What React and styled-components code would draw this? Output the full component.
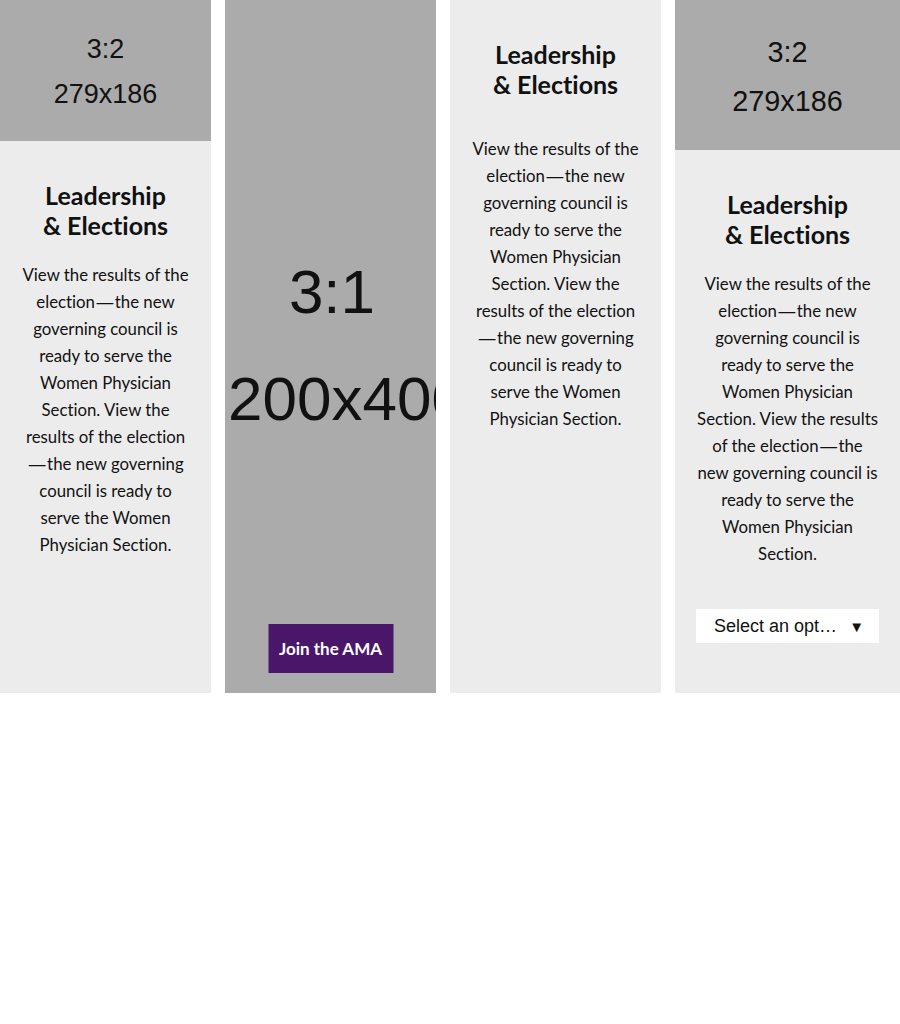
import React from 'react';
import styled, { createGlobalStyle } from 'styled-components';

const GlobalStyle = createGlobalStyle`
  html, body {
    margin: 0;
    padding: 0;
    background: #ffffff;
  }
  body {
    font-family: Lato, "Open Sans", sans-serif;
    color: #111111;
  }
`;

const Grid = styled.div`
  display: grid;
  grid-template-columns: 211px 211px 211px 1fr;
  column-gap: 14px;
  align-items: stretch;
  width: 900px;
`;

const Card = styled.article`
  container-type: inline-size;
  display: flex;
  flex-direction: column;
  background: #ececec;
  min-width: 0;
`;

const Placeholder = styled.div`
  width: 100%;
  aspect-ratio: 3 / 2;
  background: #ababab;
  display: flex;
  flex-direction: column;
  align-items: center;
  justify-content: center;
  padding-top: 3px;
  box-sizing: border-box;
  font-family: "Liberation Sans", Arial, sans-serif;
  color: #111111;
  font-size: 12.8cqw;
  line-height: 1.67;
`;

const Tall = styled.div`
  position: relative;
  flex: 1;
  background: #ababab;
  overflow: hidden;
  display: flex;
  flex-direction: column;
  justify-content: center;
  font-family: "Liberation Sans", Arial, sans-serif;
  color: #111111;
  font-size: 62px;
  line-height: 107px;
  white-space: nowrap;
  padding: 0 0 4px 3px;
`;

const TallLine = styled.div`
  text-align: ${(p) => (p.$left ? 'left' : 'center')};
`;

const JoinButton = styled.a`
  position: absolute;
  left: 50%;
  bottom: 20px;
  transform: translateX(-50%);
  display: inline-flex;
  align-items: center;
  justify-content: center;
  width: 125px;
  height: 49px;
  background: #49166a;
  color: #ffffff;
  font-family: Lato, "Open Sans", sans-serif;
  font-weight: 700;
  font-size: 17px;
  line-height: 1;
  text-decoration: none;
  font-variant-ligatures: none;
`;

const Body = styled.div`
  flex: 1;
  display: flex;
  flex-direction: column;
  align-items: stretch;
  padding: 39px 21px 50px;
  text-align: center;
  font-variant-ligatures: none;
`;

const Title = styled.h3`
  margin: 0 0 ${(p) => p.$gap}px;
  font-family: Lato, "Open Sans", sans-serif;
  font-weight: 700;
  font-size: 25px;
  line-height: 30px;
  color: #111111;
`;

const Text = styled.p`
  margin: 0;
  font-family: Lato, "Open Sans", sans-serif;
  font-size: 16.8px;
  line-height: 27px;
  color: #111111;
`;

const Dash = styled.span`
  font-family: "Liberation Sans", Arial, sans-serif;
  line-height: 1;
  padding: 0 1.5px;
`;

const SelectBox = styled.div`
  display: flex;
  align-items: center;
  margin-top: 42px;
  height: 34px;
  padding: 0 15px 0 18px;
  background: #ffffff;
  font-family: "Liberation Sans", Arial, sans-serif;
  font-size: 18px;
  color: #111111;
  text-align: left;
`;

const SelectLabel = styled.span`
  flex: 1;
  min-width: 0;
  overflow: hidden;
  white-space: nowrap;
  text-overflow: ellipsis;
  padding-right: 10px;
`;

const Caret = styled.span`
  font-size: 15px;
  line-height: 1;
`;

const sentence = (
  <>
    View the results of the election<Dash>—</Dash>the new governing council is
    ready to serve the Women Physician Section.
  </>
);

function CardBody({ titleGap = 21, children }) {
  return (
    <Body>
      <Title $gap={titleGap}>
        Leadership
        <br />& Elections
      </Title>
      <Text>
        {sentence} {sentence}
      </Text>
      {children}
    </Body>
  );
}

export default function App() {
  return (
    <>
      <GlobalStyle />
      <Grid>
        <Card>
          <Placeholder>
            <span>3:2</span>
            <span>279x186</span>
          </Placeholder>
          <CardBody />
        </Card>

        <Card>
          <Tall>
            <TallLine>3:1</TallLine>
            <TallLine $left>200x400</TallLine>
            <JoinButton href="#">Join the AMA</JoinButton>
          </Tall>
        </Card>

        <Card>
          <CardBody titleGap={36} />
        </Card>

        <Card>
          <Placeholder>
            <span>3:2</span>
            <span>279x186</span>
          </Placeholder>
          <CardBody>
            <SelectBox>
              <SelectLabel>Select an option</SelectLabel>
              <Caret>▼</Caret>
            </SelectBox>
          </CardBody>
        </Card>
      </Grid>
    </>
  );
}
